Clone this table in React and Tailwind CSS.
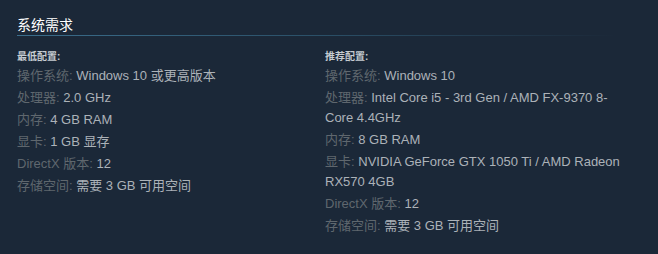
const FONT = {
  fontFamily: '"Liberation Sans", Arial, "Noto Sans CJK SC", sans-serif',
};

const minimum = [
  ["操作系统:", "Windows 10 或更高版本"],
  ["处理器:", "2.0 GHz"],
  ["内存:", "4 GB RAM"],
  ["显卡:", "1 GB 显存"],
  ["DirectX 版本:", "12"],
  ["存储空间:", "需要 3 GB 可用空间"],
];

const recommended = [
  ["操作系统:", "Windows 10"],
  ["处理器:", "Intel Core i5 - 3rd Gen / AMD FX-9370 8-Core 4.4GHz"],
  ["内存:", "8 GB RAM"],
  ["显卡:", "NVIDIA GeForce GTX 1050 Ti / AMD Radeon RX570 4GB"],
  ["DirectX 版本:", "12"],
  ["存储空间:", "需要 3 GB 可用空间"],
];

const ReqColumn = ({ title, items }) => (
  <div className="w-[296px]">
    <div className="mt-[14px] mb-[2px] text-[10px] leading-[14px] font-bold text-[#c6ccd1]">{title}</div>
    <ul>
      {items.map(([label, value]) => (
        <li key={label} className="text-[13px] leading-5 mb-[2px] text-[#acb2b8]">
          <span className="text-[#5f676e]">{label}</span> {value}
        </li>
      ))}
    </ul>
  </div>
);

export default function App() {
  return (
    <div className="w-[658px] h-[254px] bg-[#1b2838] pl-[17px] pt-[16px] overflow-hidden" style={FONT}>
      <h2 className="text-[14px] leading-[18px] pb-[1px] text-white font-normal">系统需求</h2>
      <div className="h-px w-[600px] bg-gradient-to-r from-[#3b6e8c] via-[#2b5068] to-transparent" />
      <div className="grid grid-cols-[296px_296px] gap-x-3">
        <ReqColumn title="最低配置:" items={minimum} />
        <ReqColumn title="推荐配置:" items={recommended} />
      </div>
    </div>
  );
}
